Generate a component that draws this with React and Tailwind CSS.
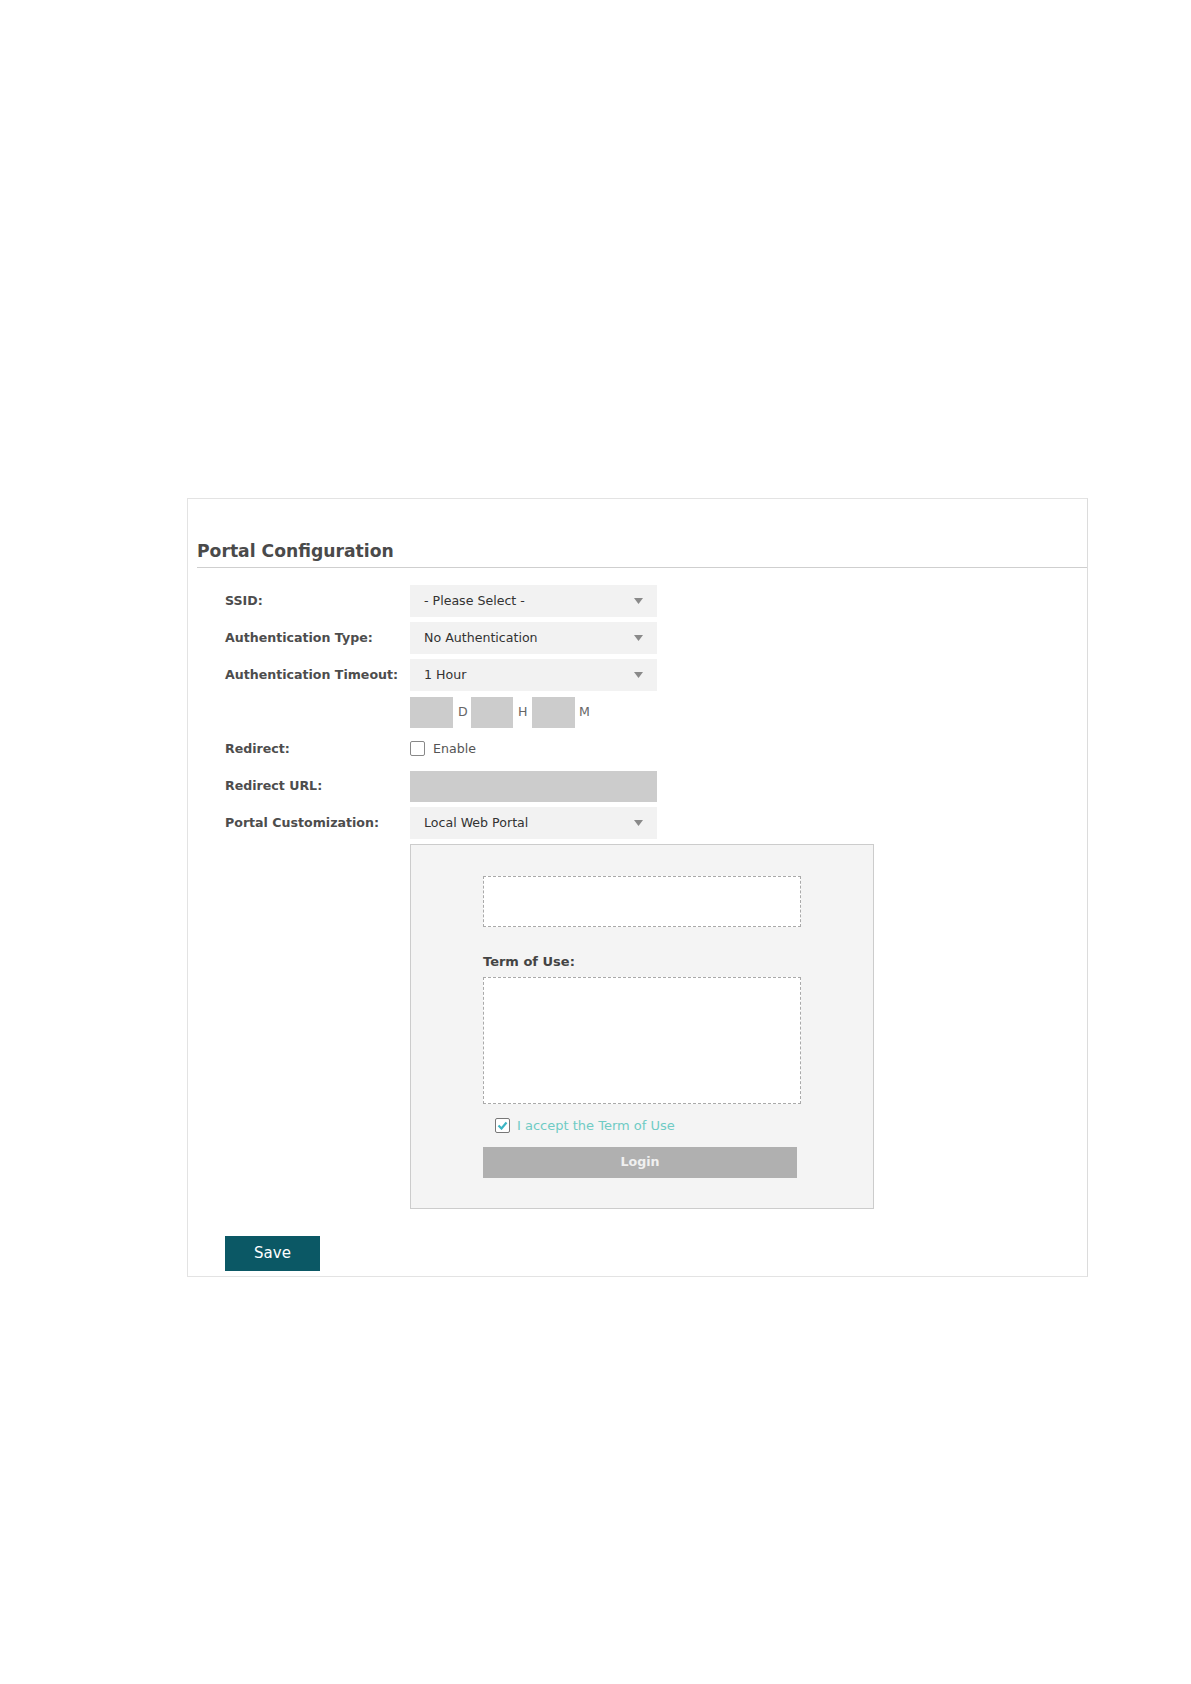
import React from "react";

function Arrow() {
  return (
    <svg width="9" height="6" viewBox="0 0 9 6" className="shrink-0">
      <path d="M0 0h9L4.5 6z" fill="#8a8a8a" />
    </svg>
  );
}

function Select({ value }) {
  return (
    <div className="w-[247px] h-[32px] bg-[#f2f2f2] flex items-center justify-between pl-[14px] pr-[14px] text-[12.6px] text-[#333]">
      <span>{value}</span>
      <Arrow />
    </div>
  );
}

function Row({ label, children }) {
  return (
    <div className="flex items-center min-h-[32px]">
      <div className="w-[185px] shrink-0 text-[12.6px] font-bold text-[#4d4d4d]">{label}</div>
      {children}
    </div>
  );
}

export default function App() {
  return (
    <div className="min-h-[1684px] bg-white pt-[498px] pl-[187px] font-['DejaVu_Sans',sans-serif]">
      <div className="w-[901px] h-[779px] border border-[#e3e3e3] border-r-[#dcdcdc] pl-[9px]">
        <div className="pt-[40px] pb-[4px] text-[17.2px] font-bold text-[#4a4a4a] leading-[24px]">
          Portal Configuration
        </div>
        <div className="h-px bg-[#cfcfcf]" />

        <div className="pl-[28px] pt-[17px] flex flex-col gap-[5px]">
          <Row label="SSID:">
            <Select value="- Please Select -" />
          </Row>
          <Row label="Authentication Type:">
            <Select value="No Authentication" />
          </Row>
          <Row label="Authentication Timeout:">
            <Select value="1 Hour" />
          </Row>
          <Row label="">
            <div className="flex items-center text-[12.6px] text-[#666]">
              <div className="w-[43px] h-[31px] bg-[#cccccc]" />
              <span className="w-[18px] pl-[5px]">D</span>
              <div className="w-[42px] h-[31px] bg-[#cccccc]" />
              <span className="w-[19px] pl-[5px]">H</span>
              <div className="w-[43px] h-[31px] bg-[#cccccc]" />
              <span className="pl-[4px]">M</span>
            </div>
          </Row>
          <Row label="Redirect:">
            <div className="flex items-center text-[12.6px] text-[#555]">
              <div className="w-[15px] h-[15px] border border-[#888] rounded-[2px] bg-white" />
              <span className="ml-[8px]">Enable</span>
            </div>
          </Row>
          <Row label="Redirect URL:">
            <div className="w-[247px] h-[31px] bg-[#cccccc]" />
          </Row>
          <Row label="Portal Customization:">
            <Select value="Local Web Portal" />
          </Row>

          <div className="pl-[185px]">
            <div className="w-[464px] h-[365px] border border-[#cccccc] bg-[#f4f4f4] pl-[72px] pt-[31px]">
              <div className="w-[318px] h-[51px] border border-dashed border-[#aaaaaa] bg-white" />
              <div className="mt-[26px] text-[13px] font-bold text-[#444] leading-[18px]">Term of Use:</div>
              <div className="mt-[6px] w-[318px] h-[127px] border border-dashed border-[#aaaaaa] bg-white" />
              <div className="mt-[12px] ml-[12px] flex items-center">
                <div className="w-[15px] h-[15px] border border-[#777] rounded-[2px] bg-white flex items-center justify-center">
                  <svg width="11" height="9" viewBox="0 0 11 9">
                    <path d="M1.5 4.5l3 3L9.5 1.5" fill="none" stroke="#3bb5c4" strokeWidth="2.2" />
                  </svg>
                </div>
                <span className="ml-[7px] text-[13px] text-[#6fcbc4]">I accept the Term of Use</span>
              </div>
              <div className="mt-[11px] w-[314px] h-[31px] bg-[#b0b0b0] flex items-center justify-center text-[12.6px] font-bold text-[#f0f0f0]">
                Login
              </div>
            </div>
          </div>

          <div className="mt-[22px]">
            <div className="w-[95px] h-[35px] bg-[#0b5865] flex items-center justify-center text-[15px] text-white">
              Save
            </div>
          </div>
        </div>
      </div>
    </div>
  );
}
